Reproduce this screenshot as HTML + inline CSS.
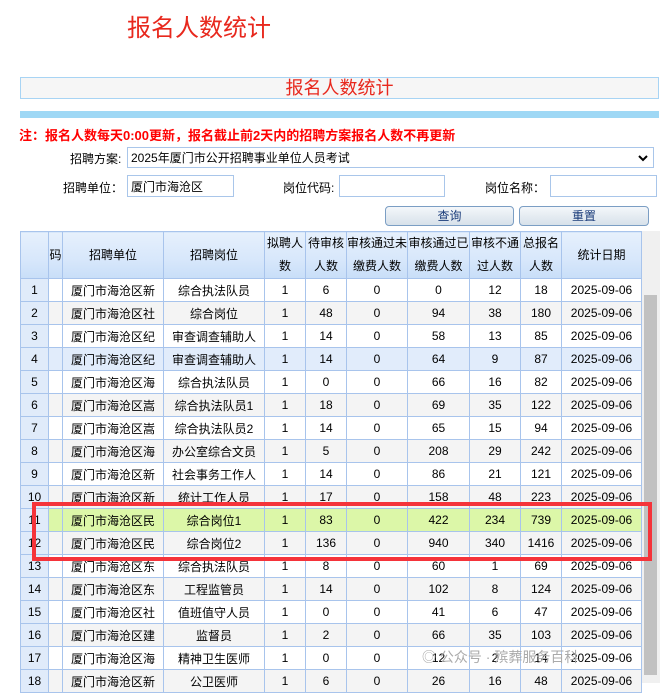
<!DOCTYPE html>
<html><head><meta charset="utf-8"><style>
*{margin:0;padding:0;box-sizing:border-box}
body{width:660px;height:683px;overflow:hidden;background:#fff;font-family:"Liberation Sans","Noto Sans CJK SC",sans-serif;font-size:12px;color:#000;position:relative}
.a{position:absolute}
input,.sel{position:absolute;border:1px solid #a9c6ea;background:#fff;height:22px;font-size:12px;padding-left:3px;line-height:20px}
table{position:absolute;left:20px;top:231px;border-collapse:collapse;table-layout:fixed;width:621px}
td,th{border:1px solid #a8c4ec;text-align:center;font-weight:normal;height:23px;white-space:nowrap;overflow:hidden;font-size:12px}
th{height:46px;background:linear-gradient(#e6f0fc,#d7e7fb 60%,#c8def8);line-height:23px}
tr.g td{background:#f4f4f4}
tr.b td{background:#e1ecfb}
tr.y td{background:#dcf7a8}
tr td.i{background:#e0ebfa}
.btn{position:absolute;top:206px;height:20px;border:1px solid #7b9ec4;border-radius:4px;background:linear-gradient(#f4f7fa,#d7e1ea);text-align:center;line-height:18px;color:#1a3c7a}
</style></head><body>
<div class="a" style="left:127px;top:8px;font-size:24px;color:#e8281d">报名人数统计</div>
<div class="a" style="left:20px;top:77px;width:639px;height:22px;border:1px solid #a8d4f4;background:#f6f6f6;text-align:center;font-size:18px;color:#e8281d;line-height:20px">报名人数统计</div>
<div class="a" style="left:20px;top:111px;width:639px;height:7px;background:#9fd8f5"></div>
<div class="a" style="left:19px;top:125px;font-size:13px;font-weight:bold;color:#f00">注：报名人数每天0:00更新，报名截止前2天内的招聘方案报名人数不再更新</div>
<div class="a" style="left:70px;top:150px">招聘方案:</div>
<div class="sel" style="left:127px;top:147px;width:527px;height:21px">2025年厦门市公开招聘事业单位人员考试<svg style="position:absolute;right:5px;top:7px" width="10" height="7" viewBox="0 0 10 7"><path d="M1 1L5 5L9 1" stroke="#000" stroke-width="2" fill="none"/></svg></div>
<div class="a" style="left:63px;top:179px">招聘单位：</div>
<input style="left:127px;top:175px;width:107px" value="厦门市海沧区">
<div class="a" style="left:283px;top:179px">岗位代码:</div>
<input style="left:339px;top:175px;width:106px">
<div class="a" style="left:485px;top:179px">岗位名称：</div>
<input style="left:550px;top:175px;width:107px">
<div class="btn" style="left:385px;width:129px">查询</div>
<div class="btn" style="left:519px;width:130px">重置</div>
<table>
<colgroup><col style="width:28px"><col style="width:14px"><col style="width:101px"><col style="width:101px"><col style="width:41px"><col style="width:41px"><col style="width:61px"><col style="width:62px"><col style="width:51px"><col style="width:41px"><col style="width:80px"></colgroup>
<tr><th></th><th>码</th><th>招聘单位</th><th>招聘岗位</th><th>拟聘人<br>数</th><th>待审核<br>人数</th><th>审核通过未<br>缴费人数</th><th>审核通过已<br>缴费人数</th><th>审核不通<br>过人数</th><th>总报名<br>人数</th><th>统计日期</th></tr>
<tr><td class="i">1</td><td></td><td>厦门市海沧区新</td><td>综合执法队员</td><td>1</td><td>6</td><td>0</td><td>0</td><td>12</td><td>18</td><td>2025-09-06</td></tr>
<tr class="g"><td class="i">2</td><td></td><td>厦门市海沧区社</td><td>综合岗位</td><td>1</td><td>48</td><td>0</td><td>94</td><td>38</td><td>180</td><td>2025-09-06</td></tr>
<tr><td class="i">3</td><td></td><td>厦门市海沧区纪</td><td>审查调查辅助人</td><td>1</td><td>14</td><td>0</td><td>58</td><td>13</td><td>85</td><td>2025-09-06</td></tr>
<tr class="b"><td class="i">4</td><td></td><td>厦门市海沧区纪</td><td>审查调查辅助人</td><td>1</td><td>14</td><td>0</td><td>64</td><td>9</td><td>87</td><td>2025-09-06</td></tr>
<tr><td class="i">5</td><td></td><td>厦门市海沧区海</td><td>综合执法队员</td><td>1</td><td>0</td><td>0</td><td>66</td><td>16</td><td>82</td><td>2025-09-06</td></tr>
<tr class="g"><td class="i">6</td><td></td><td>厦门市海沧区嵩</td><td>综合执法队员1</td><td>1</td><td>18</td><td>0</td><td>69</td><td>35</td><td>122</td><td>2025-09-06</td></tr>
<tr><td class="i">7</td><td></td><td>厦门市海沧区嵩</td><td>综合执法队员2</td><td>1</td><td>14</td><td>0</td><td>65</td><td>15</td><td>94</td><td>2025-09-06</td></tr>
<tr class="g"><td class="i">8</td><td></td><td>厦门市海沧区海</td><td>办公室综合文员</td><td>1</td><td>5</td><td>0</td><td>208</td><td>29</td><td>242</td><td>2025-09-06</td></tr>
<tr><td class="i">9</td><td></td><td>厦门市海沧区新</td><td>社会事务工作人</td><td>1</td><td>14</td><td>0</td><td>86</td><td>21</td><td>121</td><td>2025-09-06</td></tr>
<tr class="g"><td class="i">10</td><td></td><td>厦门市海沧区新</td><td>统计工作人员</td><td>1</td><td>17</td><td>0</td><td>158</td><td>48</td><td>223</td><td>2025-09-06</td></tr>
<tr class="y"><td class="i">11</td><td></td><td>厦门市海沧区民</td><td>综合岗位1</td><td>1</td><td>83</td><td>0</td><td>422</td><td>234</td><td>739</td><td>2025-09-06</td></tr>
<tr class="g"><td class="i">12</td><td></td><td>厦门市海沧区民</td><td>综合岗位2</td><td>1</td><td>136</td><td>0</td><td>940</td><td>340</td><td>1416</td><td>2025-09-06</td></tr>
<tr><td class="i">13</td><td></td><td>厦门市海沧区东</td><td>综合执法队员</td><td>1</td><td>8</td><td>0</td><td>60</td><td>1</td><td>69</td><td>2025-09-06</td></tr>
<tr class="g"><td class="i">14</td><td></td><td>厦门市海沧区东</td><td>工程监管员</td><td>1</td><td>14</td><td>0</td><td>102</td><td>8</td><td>124</td><td>2025-09-06</td></tr>
<tr><td class="i">15</td><td></td><td>厦门市海沧区社</td><td>值班值守人员</td><td>1</td><td>0</td><td>0</td><td>41</td><td>6</td><td>47</td><td>2025-09-06</td></tr>
<tr class="g"><td class="i">16</td><td></td><td>厦门市海沧区建</td><td>监督员</td><td>1</td><td>2</td><td>0</td><td>66</td><td>35</td><td>103</td><td>2025-09-06</td></tr>
<tr><td class="i">17</td><td></td><td>厦门市海沧区海</td><td>精神卫生医师</td><td>1</td><td>0</td><td>0</td><td>12</td><td>2</td><td>14</td><td>2025-09-06</td></tr>
<tr class="g"><td class="i">18</td><td></td><td>厦门市海沧区新</td><td>公卫医师</td><td>1</td><td>6</td><td>0</td><td>26</td><td>16</td><td>48</td><td>2025-09-06</td></tr>
</table>
<div class="a" style="left:641px;top:231px;width:19px;height:452px;background:#f0f0f0;border-left:1px solid #a8c4ec"></div>
<div class="a" style="left:644px;top:295px;width:13px;height:380px;background:#c1c1c1"></div>
<div class="a" style="left:32px;top:502px;width:620px;height:59px;border:4px solid #f5333a"></div>
<div class="a" style="left:422px;top:647px;font-size:14px;color:#aaa">◎ 公众号 · 殡葬服务百科</div>
</body></html>
